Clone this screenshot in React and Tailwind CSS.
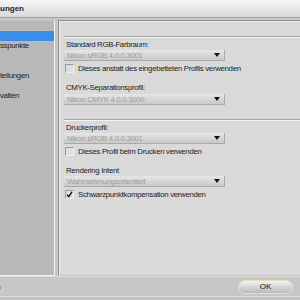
const Dropdown = ({ value }) => (
  <div className="w-[161px] h-[11px] flex items-center justify-between pl-[3px] pr-[4px] bg-linear-to-b from-[#e6e6e6] to-[#c9c9c9] border-r border-b border-[#a9a9a9] text-[#9c9c9c]">
    <span className="leading-[11px]">{value}</span>
    <svg width="6" height="4" viewBox="0 0 6 4">
      <path d="M0 0 L6 0 L3 4 Z" fill="#111" />
    </svg>
  </div>
);

const Check = ({ checked, label }) => (
  <div className="h-[11px] flex items-center gap-[4px]">
    <div className="w-[9px] h-[9px] ml-[1px] bg-[#dedede] border border-t-[#9a9a9a] border-l-[#9a9a9a] border-r-[#f0f0f0] border-b-[#f0f0f0] flex items-center justify-center">
      {checked && (
        <svg width="7" height="7" viewBox="0 0 7 7">
          <path d="M1 3.6 L2.8 5.6 L6 0.8" stroke="#111" strokeWidth="1.4" fill="none" />
        </svg>
      )}
    </div>
    <span className="leading-[11px]">{label}</span>
  </div>
);

const Label = ({ children, className = "" }) => (
  <div className={"h-[9px] leading-[9px] pl-[2px] " + className}>{children}</div>
);

const Rule = ({ className = "" }) => (
  <div className={"h-[2px] border-t border-[#a4a4a4] border-b border-b-[#f2f2f2] " + className} />
);

const sideItems = ["", "sspunkte", "", "", "tellungen", "", "valten"];

const App = () => {
  return (
    <div className="w-[300px] h-[300px] overflow-hidden bg-[#c6c6c6] flex flex-col text-[7.8px] tracking-[-0.3px] text-[#1c1c1c] font-[family-name:'Liberation_Sans',Arial,sans-serif]">
      <div className="h-[18px] shrink-0 bg-linear-to-b from-[#f7f7f7] to-[#d8d8d8] border-b border-[#a2a2a2] flex items-center">
        <span className="font-bold text-[8px] tracking-normal leading-[10px]">ungen</span>
      </div>

      <div className="h-[258px] shrink-0 flex">
        <div className="w-[55px] mt-[3px] bg-[#b8b8b8] border-r border-b border-[#f4f4f4] pt-[10px]">
          {sideItems.map((item, i) => (
            <div
              key={i}
              className={
                "h-[10px] leading-[10px] " +
                (i === 0 ? "bg-[#3a8ee8] text-white" : "")
              }
            >
              {item}
            </div>
          ))}
        </div>

        <div className="flex-1 ml-[3px] mt-[2px] mb-[1px] border-l border-t border-[#8e8e8e] bg-[#d9d9d9]">
          <div className="h-full border-l border-t border-[#ececec] pl-[4px] pt-[14px]">
            <Rule />
            <Label className="mt-[2px]">Standard RGB-Farbraum:</Label>
            <div className="mt-[1px]">
              <Dropdown value="Nikon sRGB 4.0.0.3001" />
            </div>
            <div className="mt-[2px]">
              <Check label="Dieses anstatt des eingebetteten Profils verwenden" />
            </div>
            <Label className="mt-[9px]">CMYK-Separationsprofil:</Label>
            <div className="mt-[2px]">
              <Dropdown value="Nikon CMYK 4.0.0.3000" />
            </div>
            <Rule className="mt-[14px]" />
            <Label className="mt-[2px]">Druckerprofil:</Label>
            <div className="mt-[1px]">
              <Dropdown value="Nikon sRGB 4.0.0.3001" />
            </div>
            <div className="mt-[2px]">
              <Check label="Dieses Profil beim Drucken verwenden" />
            </div>
            <Label className="mt-[9px]">Rendering Intent</Label>
            <div className="mt-[1px]">
              <Dropdown value="Wahrnehmungsorientiert" />
            </div>
            <div className="mt-[2px]">
              <Check checked label="Schwarzpunktkompensation verwenden" />
            </div>
          </div>
        </div>
      </div>

      <div className="flex-1 flex flex-col border-t border-[#dcdcdc] bg-[#c7c7c7]">
        <div className="flex-1 flex items-start justify-between">
          <div className="mt-[6px] -ml-[6px] w-[9px] h-[9px] rounded-full bg-[#a8a8a8] border border-[#e0e0e0]" />
          <div className="mt-[3px] mr-[7px] w-[55px] h-[14px] rounded-full border border-[#e4e4b4] bg-linear-to-b from-[#f2f2f2] to-[#b9b9b9] flex items-center justify-center text-[8px] tracking-normal text-[#111]">
            OK
          </div>
        </div>
        <div className="h-[4px] border-t border-[#dedede] bg-[#c2c2c2]" />
      </div>
    </div>
  );
};

export default App;
